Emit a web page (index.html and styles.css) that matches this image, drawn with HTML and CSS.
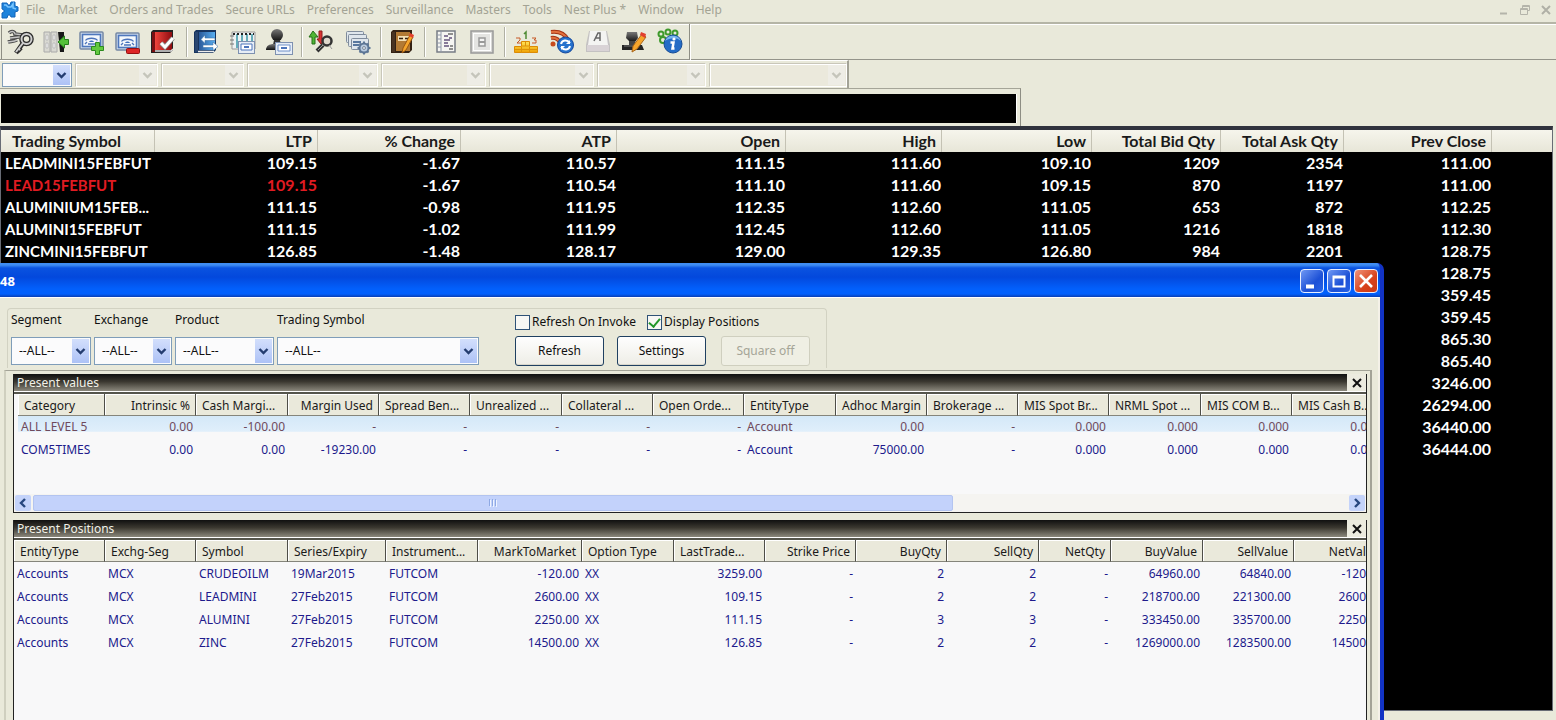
FILE: index.html
```html
<!DOCTYPE html>
<html lang="en">
<head>
<meta charset="utf-8">
<title>Market Watch</title>
<link rel="stylesheet" href="styles.css">
</head>
<body>
<svg class="defs" aria-hidden="true">
  <defs>
    <symbol id="chev" viewBox="0 0 17 20"><path d="M4.500 8l4 4 4-4" fill="none" stroke="currentColor" stroke-width="2.400"/></symbol>
    <linearGradient id="gr" x2="1"><stop stop-color="#f0443c"/><stop offset="1" stop-color="#8d0c10"/></linearGradient>
    <linearGradient id="gb" x2="1"><stop stop-color="#2a5a9a"/><stop offset="1" stop-color="#58aef0"/></linearGradient>
    <linearGradient id="gk" x2="0" y2="1"><stop stop-color="#777"/><stop offset="1" stop-color="#111"/></linearGradient>
    <linearGradient id="gy" x2="0" y2="1"><stop stop-color="#ffe45a"/><stop offset="1" stop-color="#eea000"/></linearGradient>
    <symbol id="card" viewBox="0 0 25 19"><rect x="1" y="1" width="23" height="17" rx="1" fill="#cfdcec" stroke="#7688a4" stroke-width="1.500"/><rect x="3.500" y="3.500" width="18" height="12" fill="#f4f8fc" stroke="#4f78bd" stroke-width="1.600"/><path d="M6.500 9.500c2-3 10-3 12 0M9 13h7M6 13l2-2m11 2l-2-2" fill="none" stroke="#4b73bb" stroke-width="1.300"/><path d="M10 11c1-2 4-2 5 0z" fill="#3d6fbd"/></symbol>
  </defs>
</svg>
<header class="menubar">
  <svg class="logo" width="20" height="20" viewBox="0 0 20 20"><path d="M2 3h5l1 2h2l1-3h4v4l3 1v4l-3 1v5h-4l-1-2H8l-1 3H2v-5l2-1v-2L2 9z" fill="#1f83dc" stroke="#1465bb"/><path d="M4 5h2l2 2h3l2-3v4l3 1" stroke="#7cc6ff" stroke-width="1.500" fill="none"/></svg>
  <nav class="menus">
    <button>File</button><button>Market</button><button>Orders and Trades</button><button>Secure URLs</button><button>Preferences</button><button>Surveillance</button><button>Masters</button><button>Tools</button><button>Nest Plus *</button><button>Window</button><button>Help</button>
  </nav>
  <div class="mdi-buttons">
    <button aria-label="Minimize"><svg width="12" height="12"><path d="M2 9.500h7" stroke="#b4b4aa" stroke-width="2"/></svg></button>
    <button aria-label="Restore"><svg width="12" height="12"><path d="M3.500 4V1.500h7v5H8M1.500 4.500h7v6h-7zM1 5.500h8M3 2.500h8" fill="none" stroke="#b4b4aa"/></svg></button>
    <button aria-label="Close"><svg width="12" height="12"><path d="M2 2l8 8M10 2l-8 8" stroke="#b0b0a6" stroke-width="2"/></svg></button>
  </div>
</header>
<div class="toolbar">
  <button aria-label="Keys"><svg width="28" height="28" viewBox="0 0 28 28" fill="none"><g stroke="#4a4a4a" stroke-width="3.600"><path d="M3 5c3-3 6-1 6 1l8 1M4 10l9-1M2 14c3-1 5 0 9-2"/></g><g stroke="#c4c4c4" stroke-width="1.400"><path d="M3 5c3-3 6-1 6 1l8 1M4 10l9-1M2 14c3-1 5 0 9-2"/></g><g stroke="#2c2c2c" stroke-width="4.600"><circle cx="20.500" cy="11" r="5"/><path d="M17 15l-7 10M12 20l3 3"/></g><g stroke="#cfcfcf" stroke-width="2"><circle cx="20.500" cy="11" r="5"/><path d="M17 15l-7 9M12 20l2 2"/></g></svg></button>
  <button aria-label="Log off"><svg width="28" height="28" viewBox="0 0 28 28"><path d="M2 4h6v20H2zM9 4h6v20H9z" fill="#d9d9d2" stroke="#aaa"/><path d="M4 7h2v5H4zm0 8h2v5H4zm7-8h2v5h-2zm0 8h2v5h-2z" fill="#fff" stroke="#bbb"/><path d="M16 4h6v20h-4z" fill="#181818"/><path d="M26.500 11.500h-4V8L16 14l6.500 6v-3.500h4z" fill="#55c13a" stroke="#267e1c"/></svg></button>
  <button aria-label="Buy order"><svg width="28" height="28" viewBox="0 0 28 28"><use href="#card" x="1" y="3" width="25" height="19"/><path d="M17.500 14.500h4v4h4v4h-4v4h-4v-4h-4v-4h4z" fill="#62c93f" stroke="#2c8a1e"/></svg></button>
  <button aria-label="Sell order"><svg width="28" height="28" viewBox="0 0 28 28"><use href="#card" x="1" y="4" width="25" height="19"/><rect x="12.500" y="20.500" width="13" height="5" rx="1" fill="#dd2525" stroke="#961010"/></svg></button>
  <button aria-label="Order book"><svg width="28" height="28" viewBox="0 0 28 28"><path d="M1 4l2-2h20v20l-3 3H1z" fill="#222"/><path d="M5 4h17v18H5z" fill="url(#gr)"/><path d="M2 4h3v20H2z" fill="#7a1013"/><path d="M5 23h16l2-2" stroke="#ddd" stroke-width="1.500" fill="none"/><path d="M11 15l4 4 8-9" fill="none" stroke="#888" stroke-width="4.600"/><path d="M11 15l4 4 8-9" fill="none" stroke="#fff" stroke-width="3"/></svg></button>
  <span class="sep"></span>
  <button aria-label="Trade book"><svg width="28" height="28" viewBox="0 0 28 28"><path d="M1 4l2-2h20v20l-3 3H1z" fill="#17345e"/><path d="M6 4h16v18H6z" fill="url(#gb)"/><path d="M2 4h3v20H2z" fill="#2a4771"/><path d="M5 23.500h16" stroke="#eee" stroke-width="1.500"/><path d="M22 10H12V7l-4 4.500 4 4v-3h10zM10 17h10v-3l5 4.500-5 4v-3H10z" fill="#fff" stroke="#3973aa" stroke-width=".6"/></svg></button>
  <button aria-label="Market depth"><svg width="28" height="28" viewBox="0 0 28 28"><path d="M3 4h23v17H3z" fill="#eef2f3" stroke="#999"/><path d="M8 6v14M13 6v14M18 6v8M23 6v8" stroke="#3897a8" stroke-width="1.500"/><path d="M4 6h21" stroke="#222" stroke-width="2" stroke-dasharray="2 2"/><path d="M1 8h4m-4 4h4m-4 4h4" stroke="#777"/><rect x="9.500" y="13.500" width="16" height="12" fill="#e6edf6" stroke="#7e91b0"/><path d="M12 16h11v6H12z" fill="#fff" stroke="#4c75bb"/><path d="M15 19h5" stroke="#4c75bb" stroke-width="2"/></svg></button>
  <button aria-label="Client"><svg width="28" height="28" viewBox="0 0 28 28"><circle cx="12" cy="7" r="6" fill="url(#gk)"/><path d="M9 12h6l1 5H8z" fill="#333"/><path d="M1 22c0-4 3-6 8-6h5c4 0 6 2 6 6z" fill="url(#gk)"/><rect x="10.500" y="14.500" width="17" height="12" fill="#e6edf6" stroke="#7e91b0"/><path d="M13 17h12v6H13z" fill="#fff" stroke="#6c8fc8"/><path d="M16 20h6" stroke="#4c75bb" stroke-width="2"/></svg></button>
  <span class="sep"></span>
  <button aria-label="Find scrip"><svg width="28" height="28" viewBox="0 0 28 28"><path d="M4 16V9H1l4-6 5 6H7v7z" fill="#4fb534" stroke="#246f18"/><path d="M11 3h3v8h3l-4 5-4-5h2z" fill="#d83232" stroke="#8f1a1a"/><circle cx="19" cy="13" r="4.500" fill="#ded8cc" stroke="#333" stroke-width="2.500"/><path d="M15 17l-6 6" stroke="#333" stroke-width="4"/><path d="M15 17l-5 5M21 17l3 4" stroke="#999"/></svg></button>
  <button aria-label="Manage orders"><svg width="28" height="28" viewBox="0 0 28 28" fill="#dfe6ec" stroke="#7f8c9c"><rect x="2.500" y="3.500" width="17" height="11" rx="1"/><rect x="4.500" y="6.500" width="18" height="12" rx="1"/><rect x="7.500" y="10.500" width="17" height="11" rx="1"/><path d="M9 14h8m-8 3h6" stroke="#58779e" stroke-width="2"/><circle cx="20" cy="20" r="4.500" fill="#b9cbe0" stroke="#5d7695" stroke-width="2"/><circle cx="20" cy="20" r="1.500"/><path d="M20 13.500v2m0 9v2M13.500 20h2m9 0h2M15.500 15.500l1 1m7 7l1 1m0-9l-1 1m-7 7l-1 1" stroke="#5d7695" stroke-width="2"/></svg></button>
  <span class="sep wide"></span>
  <button aria-label="Notes"><svg width="28" height="28" viewBox="0 0 28 28"><path d="M3 4l2-2h19v20l-3 3H3z" fill="#332113"/><path d="M8 4h14v19H8z" fill="#b27a35"/><path d="M4 4h3v20H4z" fill="#483322"/><path d="M10 8h11v5H10z" fill="#f4dfb5"/><path d="M11 10.500h4m2 0h3" stroke="#332113" stroke-width="1.500"/><path d="M22 7l-7 13-1 5 4-3 7-13z" fill="#f6a52b" stroke="#9a5710"/><path d="M22 5l4 2-1 3-4-2z" fill="#e1402e"/></svg></button>
  <span class="sep wide"></span>
  <button aria-label="Log"><svg width="28" height="28" viewBox="0 0 28 28"><path d="M5 3h18v21H5z" fill="#f5f5f2" stroke="#777c85" stroke-width="1.500"/><path d="M9 3v21M5 7h4m-4 4h4m-4 4h4m-4 4h4" stroke="#9098a8"/><path d="M12 8h4m1 2h3m-8 2h6m-6 3h4m-4 3h5" stroke="#63517c" stroke-width="1.500"/><path d="M16 6h5m-4 15h4m-3-3h3" stroke="#6d6d6d" stroke-width="1.500"/></svg></button>
  <button aria-label="Lock"><svg width="28" height="28" viewBox="0 0 28 28"><rect x="3" y="3" width="22" height="22" fill="#d8d8d5" stroke="#999" stroke-width="1.500"/><rect x="5.500" y="5.500" width="17" height="17" fill="#e4e4e2" stroke="#fff"/><path d="M11 10h6v8h-6z" fill="#f4f4f4" stroke="#999" stroke-width="1.500"/><path d="M11 14h6" stroke="#999" stroke-width="2"/></svg></button>
  <span class="sep wide"></span>
  <button aria-label="Top gainers"><svg width="28" height="28" viewBox="0 0 28 28"><path d="M2.500 18.500h7v-5h8v5h8v6h-23z" fill="url(#gy)" stroke="#dc8b04"/><path d="M3 21.500h23M10 18h7m-7.500 1v6m8-6v6M13.500 14v4" stroke="#dc9208"/><path d="M4 10h4v2l-3 3h4M20 10h4l-2 2h2v3h-4" fill="none" stroke="#c75b28"/><path d="M12 6l2-2v7" fill="none" stroke="#4f8b35" stroke-width="1.500"/></svg></button>
  <button aria-label="Refresh feed"><svg width="28" height="28" viewBox="0 0 28 28"><path d="M3 4c8-1 14 2 17 8M3 10c5-1 8 2 10 6" fill="none" stroke="#a43110" stroke-width="4"/><path d="M3 4c8-1 14 2 17 8M3 10c5-1 8 2 10 6" fill="none" stroke="#e2713e" stroke-width="2"/><circle cx="5" cy="16" r="2.500" fill="#c84a1c"/><circle cx="17.500" cy="17" r="8" fill="#2672cd" stroke="#16479a"/><path d="M13 16c1-4 6-5 9-1M22 18c-1 4-6 5-9 1" fill="none" stroke="#fff" stroke-width="2"/><path d="M22 12v4h-4zM13 22v-4h4z" fill="#fff"/></svg></button>
  <button aria-label="Keyboard"><svg width="28" height="28" viewBox="0 0 28 28"><path d="M5 3h18l3 14v7H2v-7z" fill="#c4c2c2"/><path d="M6 3h16l2 14H4z" fill="#f4f4f2"/><path d="M3 17h22v6H3z" fill="#d9d3d6"/><path d="M10 13l4-8h2v8m-4-3h4" fill="none" stroke="#666" stroke-width="1.500"/></svg></button>
  <button aria-label="Edit user"><svg width="28" height="28" viewBox="0 0 28 28"><path d="M7 4h10l1 6-3 4h-5l-4-4z" fill="url(#gk)"/><path d="M9 13h6v4H9z" fill="#444"/><path d="M2 17h20l2 5H2z" fill="#252525"/><path d="M4 18h14" stroke="#777"/><path d="M22 6l-9 12-1 6 5-3 9-12z" fill="#f6a52b" stroke="#a8651b"/><path d="M21 4l5 2-1 4-5-3z" fill="#e1402e"/></svg></button>
  <button aria-label="About"><svg width="28" height="28" viewBox="0 0 28 28"><g fill="none" stroke="#3f9a2c" stroke-width="2"><circle cx="5" cy="6" r="2.500"/><circle cx="12" cy="4" r="2.500"/><circle cx="19" cy="5" r="2.500"/><circle cx="7" cy="12" r="3"/></g><circle cx="17" cy="16" r="9" fill="#246cc6" stroke="#174c95"/><path d="M9 13a8.500 8 0 0 1 16 0c-5-4-11-3-16 0z" fill="#78b5ef"/><circle cx="18" cy="11" r="1.600" fill="#fff"/><path d="M14.500 14.500h3l-1 6h2" fill="none" stroke="#fff" stroke-width="2.500"/></svg></button>
  <span class="sep end"></span>
</div>
<div class="combos">
  <span class="combo live w70"><select aria-label="Exchange"><option></option></select><svg><use href="#chev"/></svg></span>
  <span class="combo off w83"><select aria-label="Segment" disabled></select><svg><use href="#chev"/></svg></span>
  <span class="combo off w83"><select aria-label="Instrument" disabled></select><svg><use href="#chev"/></svg></span>
  <span class="combo off w131"><select aria-label="Symbol" disabled></select><svg><use href="#chev"/></svg></span>
  <span class="combo off w105"><select aria-label="Series" disabled></select><svg><use href="#chev"/></svg></span>
  <span class="combo off w105"><select aria-label="Option type" disabled></select><svg><use href="#chev"/></svg></span>
  <span class="combo off w109"><select aria-label="Strike" disabled></select><svg><use href="#chev"/></svg></span>
  <span class="combo off w138"><select aria-label="Expiry" disabled></select><svg><use href="#chev"/></svg></span>
</div>
<div class="ticker"><div class="ticker-screen"></div></div>
<main class="desk">
  <table class="watch">
    <colgroup><col class="c154"><col class="c163"><col class="c143"><col class="c156"><col class="c169"><col class="c156"><col class="c150"><col class="c129"><col class="c123"><col class="c148"><col></colgroup>
    <thead><tr><th>Trading Symbol</th><th>LTP</th><th>% Change</th><th>ATP</th><th>Open</th><th>High</th><th>Low</th><th>Total Bid Qty</th><th>Total Ask Qty</th><th>Prev Close</th><th></th></tr></thead>
    <tbody>
      <tr><td>LEADMINI15FEBFUT</td><td>109.15</td><td>-1.67</td><td>110.57</td><td>111.15</td><td>111.60</td><td>109.10</td><td>1209</td><td>2354</td><td>111.00</td><td></td></tr>
      <tr><td class="down">LEAD15FEBFUT</td><td class="down">109.15</td><td>-1.67</td><td>110.54</td><td>111.10</td><td>111.60</td><td>109.15</td><td>870</td><td>1197</td><td>111.00</td><td></td></tr>
      <tr><td>ALUMINIUM15FEB...</td><td>111.15</td><td>-0.98</td><td>111.95</td><td>112.35</td><td>112.60</td><td>111.05</td><td>653</td><td>872</td><td>112.25</td><td></td></tr>
      <tr><td>ALUMINI15FEBFUT</td><td>111.15</td><td>-1.02</td><td>111.99</td><td>112.45</td><td>112.60</td><td>111.05</td><td>1216</td><td>1818</td><td>112.30</td><td></td></tr>
      <tr><td>ZINCMINI15FEBFUT</td><td>126.85</td><td>-1.48</td><td>128.17</td><td>129.00</td><td>129.35</td><td>126.80</td><td>984</td><td>2201</td><td>128.75</td><td></td></tr>
      <tr><td colspan="9"></td><td>128.75</td><td></td></tr>
      <tr><td colspan="9"></td><td>359.45</td><td></td></tr>
      <tr><td colspan="9"></td><td>359.45</td><td></td></tr>
      <tr><td colspan="9"></td><td>865.30</td><td></td></tr>
      <tr><td colspan="9"></td><td>865.40</td><td></td></tr>
      <tr><td colspan="9"></td><td>3246.00</td><td></td></tr>
      <tr><td colspan="9"></td><td>26294.00</td><td></td></tr>
      <tr><td colspan="9"></td><td>36440.00</td><td></td></tr>
      <tr><td colspan="9"></td><td>36444.00</td><td></td></tr>
    </tbody>
  </table>
</main>
<section class="window">
  <div class="titlebar">
    <span class="title">48</span>
    <button class="wb" aria-label="Minimize"><svg width="22" height="22"><path d="M5 16.500h8" stroke="#fff" stroke-width="4"/></svg></button>
    <button class="wb" aria-label="Maximize"><svg width="22" height="22"><path d="M5.500 6.500h11v10h-11zM5 7.500h12" fill="none" stroke="#fff" stroke-width="2"/></svg></button>
    <button class="wb red" aria-label="Close"><svg width="22" height="22"><path d="M5 5l12 12M17 5L5 17" stroke="#fff" stroke-width="2.600"/></svg></button>
  </div>
  <div class="body">
    <div class="filters">
      <div class="field"><label for="seg">Segment</label><span class="combo live w80"><select id="seg"><option>--ALL--</option></select><svg><use href="#chev"/></svg></span></div>
      <div class="field"><label for="exc">Exchange</label><span class="combo live w78"><select id="exc"><option>--ALL--</option></select><svg><use href="#chev"/></svg></span></div>
      <div class="field"><label for="prd">Product</label><span class="combo live w99"><select id="prd"><option>--ALL--</option></select><svg><use href="#chev"/></svg></span></div>
      <div class="field"><label for="sym">Trading Symbol</label><span class="combo live w202"><select id="sym"><option>--ALL--</option></select><svg><use href="#chev"/></svg></span></div>
      <div class="actions">
        <div class="checks"><label><input type="checkbox"><span>Refresh On Invoke</span></label><label><input type="checkbox" checked><span>Display Positions</span></label></div>
        <div class="btns"><button>Refresh</button><button>Settings</button><button disabled>Square off</button></div>
      </div>
    </div>
    <div class="panes">
      <section class="pane">
        <div class="pane-title"><h2>Present values</h2><button aria-label="Close"><svg width="12" height="12"><path d="M2 2l8 8M10 2l-8 8" stroke="#111" stroke-width="2"/></svg></button></div>
        <div class="sheet values">
          <table class="grid">
            <colgroup><col class="c87"><col class="c91"><col class="c92"><col class="c91"><col class="c91"><col class="c92"><col class="c91"><col class="c91"><col class="c92"><col class="c91"><col class="c91"><col class="c91"><col class="c92"><col class="c91"><col class="c92"></colgroup>
            <thead><tr><th class="l">Category</th><th>Intrinsic %</th><th class="l">Cash Margi...</th><th>Margin Used</th><th class="l">Spread Ben...</th><th class="l">Unrealized ...</th><th class="l">Collateral ...</th><th class="l">Open Orde...</th><th class="l">EntityType</th><th>Adhoc Margin</th><th class="l">Brokerage ...</th><th class="l">MIS Spot Br...</th><th class="l">NRML Spot ...</th><th class="l">MIS COM B...</th><th class="l">MIS Cash B...</th></tr></thead>
            <tbody>
              <tr class="sel"><td class="l">ALL LEVEL 5</td><td>0.00</td><td>-100.00</td><td>-</td><td>-</td><td>-</td><td>-</td><td>-</td><td class="l">Account</td><td>0.00</td><td>-</td><td>0.000</td><td>0.000</td><td>0.000</td><td>0.000</td></tr>
              <tr><td class="l">COM5TIMES</td><td>0.00</td><td>0.00</td><td>-19230.00</td><td>-</td><td>-</td><td>-</td><td>-</td><td class="l">Account</td><td>75000.00</td><td>-</td><td>0.000</td><td>0.000</td><td>0.000</td><td>0.000</td></tr>
            </tbody>
          </table>
        </div>
        <div class="scroll">
          <button aria-label="Scroll left"><svg width="16" height="16"><path d="M10 4L6 8l4 4" fill="none" stroke="#27477e" stroke-width="2.400"/></svg></button>
          <div class="track"><div class="thumb"><svg width="10" height="8"><path d="M1.500 0v7M4.500 0v7M7.500 0v7" stroke="#8ea9e4"/><path d="M2.500 1v7M5.500 1v7M8.500 1v7" stroke="#eef3ff"/></svg></div></div>
          <button aria-label="Scroll right"><svg width="16" height="16"><path d="M6 4l4 4-4 4" fill="none" stroke="#27477e" stroke-width="2.400"/></svg></button>
        </div>
      </section>
      <section class="pane positions">
        <div class="pane-title"><h2>Present Positions</h2><button aria-label="Close"><svg width="12" height="12"><path d="M2 2l8 8M10 2l-8 8" stroke="#111" stroke-width="2"/></svg></button></div>
        <div class="sheet">
          <table class="grid">
            <colgroup><col class="c91"><col class="c91"><col class="c92"><col class="c98"><col class="c92"><col class="c104"><col class="c92"><col class="c91"><col class="c91"><col class="c91"><col class="c92"><col class="c72"><col class="c92"><col class="c91"><col class="c92"></colgroup>
            <thead><tr><th class="l">EntityType</th><th class="l">Exchg-Seg</th><th class="l">Symbol</th><th class="l">Series/Expiry</th><th class="l">Instrument...</th><th>MarkToMarket</th><th class="l">Option Type</th><th class="l">LastTrade...</th><th>Strike Price</th><th>BuyQty</th><th>SellQty</th><th>NetQty</th><th>BuyValue</th><th>SellValue</th><th>NetValue</th></tr></thead>
            <tbody>
              <tr><td class="l">Accounts</td><td class="l">MCX</td><td class="l">CRUDEOILM</td><td class="l">19Mar2015</td><td class="l">FUTCOM</td><td>-120.00</td><td class="l">XX</td><td>3259.00</td><td>-</td><td>2</td><td>2</td><td>-</td><td>64960.00</td><td>64840.00</td><td>-120.00</td></tr>
              <tr><td class="l">Accounts</td><td class="l">MCX</td><td class="l">LEADMINI</td><td class="l">27Feb2015</td><td class="l">FUTCOM</td><td>2600.00</td><td class="l">XX</td><td>109.15</td><td>-</td><td>2</td><td>2</td><td>-</td><td>218700.00</td><td>221300.00</td><td>2600.00</td></tr>
              <tr><td class="l">Accounts</td><td class="l">MCX</td><td class="l">ALUMINI</td><td class="l">27Feb2015</td><td class="l">FUTCOM</td><td>2250.00</td><td class="l">XX</td><td>111.15</td><td>-</td><td>3</td><td>3</td><td>-</td><td>333450.00</td><td>335700.00</td><td>2250.00</td></tr>
              <tr><td class="l">Accounts</td><td class="l">MCX</td><td class="l">ZINC</td><td class="l">27Feb2015</td><td class="l">FUTCOM</td><td>14500.00</td><td class="l">XX</td><td>126.85</td><td>-</td><td>2</td><td>2</td><td>-</td><td>1269000.00</td><td>1283500.00</td><td>14500.00</td></tr>
            </tbody>
          </table>
        </div>
      </section>
    </div>
  </div>
</section>
</body>
</html>
```
FILE: styles.css
```css
* { box-sizing: border-box; }
html, body { height: 100%; }
body {
  margin: 0;
  display: flex;
  flex-direction: column;
  position: relative;
  overflow: hidden;
  background: #e9e9da;
  color: #111;
  font: 12px/16px "Noto Sans", "Open Sans", sans-serif;
}
button, select, input { font: inherit; color: inherit; }
button { border: 0; padding: 0; background: none; }
svg { display: block; }
.defs { position: absolute; width: 0; height: 0; }

.menubar { display: flex; align-items: center; height: 22px; flex: none; padding-bottom: 3px; color: #a3a394; }
.logo { background: #fff; }
.menus { display: flex; gap: 12px; padding-left: 6px; flex: 1; white-space: nowrap; }
.mdi-buttons { display: flex; gap: 9px; padding-right: 4px; }

.toolbar { display: flex; align-items: center; height: 38px; flex: none; border-top: 2px solid #b5b5a6; border-bottom: 1px solid #94948a; box-shadow: inset 0 1px #fff; padding-left: 1px; }
.toolbar::before { content: ""; width: 1px; height: 34px; background: #8e8e84; }
.toolbar button { width: 36px; display: grid; place-items: center; }
.sep { width: 7px; height: 30px; border-left: 1px solid #b0b0a3; box-shadow: inset 1px 0 #fff; margin-left: 4px; margin-right: -4px; }
.sep.wide { margin-right: -3px; }
.sep.end { height: 36px; margin-left: 1px; border-color: #8e8e84; }

.combos { display: flex; gap: 3px; align-items: center; align-self: flex-start; height: 28px; flex: none; padding: 0 0 0 2px; border-right: 2px solid #a3a397; border-top: 1px solid #fff; }
.combo { display: grid; align-items: center; height: 24px; }
.combo select { grid-area: 1 / 1; width: 100%; height: 100%; appearance: none; border: 1px solid #7f9db9; border-radius: 0; background: #fbfbfc; margin: 0; padding: 0 20px 0 7px; opacity: 1; }
.combo svg { grid-area: 1 / 1; justify-self: end; width: 17px; height: calc(100% - 4px); margin-right: 2px; color: #243d70; background: linear-gradient(#d3dffc, #adc2f6); pointer-events: none; }
.combo.off select { border-color: #c9c7ba #fff #fff #c9c7ba; background: #ebe9dc; box-shadow: inset 1px 1px #fff; }
.combo.off svg { background: #eeede6; color: #c5c5bb; }
.w70 { width: 70px; } .w83 { width: 83px; } .w131 { width: 131px; } .w105 { width: 105px; } .w109 { width: 109px; } .w138 { width: 138px; }
.w80 { width: 80px; } .w78 { width: 78px; } .w99 { width: 99px; } .w202 { width: 202px; }

.ticker { flex: none; width: 1021px; max-width: 100%; height: 38px; padding: 5px 3px 3px 1px; border-top: 1px solid #a5a598; border-right: 1px solid #8e8e84; }
.ticker-screen { height: 100%; background: #000; border-right: 1px solid #fff; }

.desk { flex: 1; min-height: 0; margin: 0 3px 9px 0; border: 1px solid #686c75; border-top: 4px solid #30333d; background: #000; overflow: hidden; }
.desk + .window { display: flex; }
.watch { width: 100%; table-layout: fixed; border-collapse: separate; border-spacing: 0; color: #fff; font: bold 16px/22px Lato, "Noto Sans", sans-serif; white-space: nowrap; }
.watch th { height: 22px; padding: 0 5px 0 0; line-height: 20px; color: #1a1a1a; text-align: right; background: linear-gradient(#f6f5ec, #e7e6d8); border-right: 1px solid #c4c2b4; }
.watch th:first-child { text-align: left; padding-left: 11px; }
.watch th:last-child { border: 0; }
.watch td { height: 22px; padding: 0 1px 0 0; text-align: right; }
.watch td:first-child { text-align: left; padding-left: 4px; font-size: 15px; }
.watch .down { color: #e11b22; }
.c154 { width: 154px; } .c163 { width: 163px; } .c143 { width: 143px; } .c156 { width: 156px; } .c169 { width: 169px; } .c150 { width: 150px; } .c129 { width: 129px; } .c123 { width: 123px; } .c148 { width: 148px; }

.window { position: absolute; left: 0; right: 172px; top: 263px; bottom: 0; flex-direction: column; border-right: 4px solid #1233c4; border-radius: 0 7px 0 0; background: #1233c4; overflow: hidden; }
.titlebar { display: flex; align-items: center; gap: 3px; height: 34px; flex: none; padding-right: 2px; padding-top: 2px; background: linear-gradient(#3f8df2 0, #3f8df2 2px, #0a53e0 5px, #0348dc 14px, #0260fc 26px, #0260fc 31px, #0a3fb4 34px); }
.title { flex: 1; color: #fff; font-weight: bold; font-size: 13px; }
.wb { width: 24px; height: 24px; border: 1px solid #e9efff; border-radius: 4px; background: linear-gradient(135deg, #6f98f4, #1c50d6 60%, #2763e6); }
.wb.red { background: linear-gradient(135deg, #f0937a, #d8421c 60%, #c93a16); }
.body { flex: 1; min-height: 0; display: flex; flex-direction: column; background: #e9e9da; border-top: 1px solid #fff; border-right: 2px solid #f4f1e8; }

.filters { display: flex; gap: 3px; align-self: flex-start; flex: none; height: 60px; width: 820px; margin: 10px 0 0 7px; padding: 3px 0 0 3px; border: 1px solid #d2d2c2; border-bottom: 0; border-radius: 4px 4px 0 0; }
.field { display: flex; flex-direction: column; gap: 9px; }
.field .combo { height: 28px; }
.actions { margin-left: 33px; display: flex; flex-direction: column; gap: 6px; }
.checks { display: flex; gap: 11px; padding-top: 2px; }
.checks label { display: flex; align-items: center; gap: 2px; }
.checks input { appearance: none; width: 15px; height: 15px; margin: 0; border: 1px solid #2f5277; background: #f7f7f4; }
.checks input:checked { display: grid; place-items: center; }
.checks input:checked::before { content: ""; width: 5px; height: 9px; border: solid #22962a; border-width: 0 2px 2px 0; transform: rotate(40deg); margin-bottom: 2px; }
.btns { display: flex; gap: 13px; }
.btns button { width: 89px; height: 30px; border: 1px solid #1f4061; border-radius: 3px; background: linear-gradient(#fefefe, #eeede6); box-shadow: inset 0 -1px #d8d6cb; }
.btns button:disabled { border-color: #cfcfbf; background: #efefe4; color: #a5a597; box-shadow: none; margin-left: 2px; }

.panes { flex: 1; min-height: 0; display: flex; flex-direction: column; gap: 7px; margin: 2px 6px 0 4px; padding: 3px 3px 0 7px; border: solid #a3a397; border-width: 1px 2px 0; border-left-color: #cfcfbf; }
.pane { flex: none; display: flex; flex-direction: column; overflow: hidden; border: solid #222; border-width: 0 1px 1px; background: #f8f8f9; }
.pane.positions { flex: 1; min-height: 0; border-bottom: 0; }
.pane-title { display: flex; height: 18px; flex: none; background: linear-gradient(#101010, #3b3830 45%, #8b887c); border-bottom: 1px solid #fff; }
.pane-title h2 { flex: 1; margin: 0; padding-left: 3px; color: #f1f1e8; font-size: 12px; font-weight: normal; line-height: 17px; }
.pane-title button { width: 19px; background: #ecebdf; display: grid; place-items: center; }
.sheet { overflow: hidden; border-top: 2px solid #55554c; }
.values { height: 102px; padding-left: 4px; }
.grid { table-layout: fixed; width: 1371px; border-collapse: separate; border-spacing: 0; white-space: nowrap; color: #201a8c; }
.values .grid { width: 1366px; }
.grid th { height: 22px; padding: 2px 5px 0; font-weight: normal; text-align: right; color: #1a1a1a; background: #eae9db; border-right: 1px solid #4e4e48; border-bottom: 1px solid #85857b; box-shadow: inset 1px 1px #fff; }
.grid td { height: 23px; padding: 0 3px; text-align: right; }
.grid .l { text-align: left; }
.grid th.l { padding-left: 6px; }
.sel td { height: 22px; color: #6f4a5c; background: linear-gradient(#d4e8f8, #e0effb 70%, #f8f8f9 72%); }
.scroll { display: flex; height: 18px; flex: none; padding: 1px; gap: 2px; background: #f5f4f1; }
.scroll button { width: 16px; height: 16px; background: #c4d3fa; border-radius: 2px; }
.track { flex: 1; }
.thumb { width: 70%; height: 100%; background: #c3d2fb; border: 1px solid #b3c4f0; border-radius: 2px; display: grid; place-items: center; }
.c87 { width: 87px; } .c91 { width: 91px; } .c92 { width: 92px; } .c98 { width: 98px; } .c104 { width: 104px; } .c72 { width: 72px; }
```
